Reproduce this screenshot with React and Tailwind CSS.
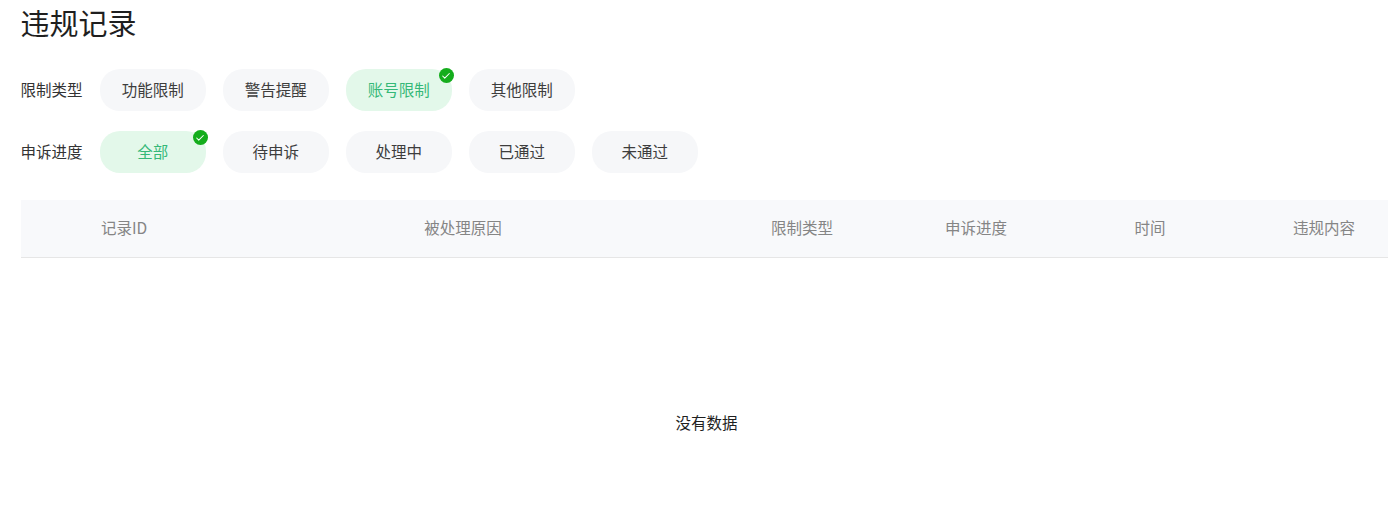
import { Check } from 'lucide-react';

const typeOptions = [
  { label: '功能限制' },
  { label: '警告提醒' },
  { label: '账号限制', active: true },
  { label: '其他限制' },
];

const progressOptions = [
  { label: '全部', active: true },
  { label: '待申诉' },
  { label: '处理中' },
  { label: '已通过' },
  { label: '未通过' },
];

const columns = ['限制类型', '申诉进度', '时间', '违规内容'];

function Pill({ label, active }) {
  return (
    <div
      className={`relative flex h-[42px] w-[105.5px] items-center justify-center rounded-[20px] ${
        active ? 'bg-[#e3f8ea] text-[#35b878]' : 'bg-[#f6f7f9] text-[#3d3d3d]'
      }`}
    >
      {label}
      {active && (
        <span className="absolute right-[-2px] top-[-1px] flex h-[15px] w-[15px] items-center justify-center rounded-full bg-[#14ad1c] text-white">
          <Check size={10} strokeWidth={2.5} />
        </span>
      )}
    </div>
  );
}

function FilterRow({ title, options }) {
  return (
    <div className="flex h-[42px] items-center">
      <div className="w-[79.5px] text-[#333333]">{title}</div>
      <div className="flex gap-[17.5px]">
        {options.map((o) => (
          <Pill key={o.label} label={o.label} active={o.active} />
        ))}
      </div>
    </div>
  );
}

export default function App() {
  return (
    <div
      className="h-[530px] overflow-hidden bg-white pl-[20.5px] text-[15.5px]"
      style={{ fontFamily: '"Noto Sans CJK SC", "Noto Sans", sans-serif' }}
    >
      <h1 className="h-[69px] pt-[2px] text-[29px] leading-[40px] font-normal text-[#1f1f1f]">违规记录</h1>
      <div className="flex flex-col gap-[20px]">
        <FilterRow title="限制类型" options={typeOptions} />
        <FilterRow title="申诉进度" options={progressOptions} />
      </div>
      <div className="mt-[27px] grid h-[58px] w-[1390px] grid-cols-[190.5px_504px_174px_174px_174px_174px] items-center border-b border-[#e6e6e6] bg-[#f8f9fb] pb-[1px] text-[#858585]">
        <div className="pl-[80.5px]">记录ID</div>
        <div className="text-center">被处理原因</div>
        {columns.map((c) => (
          <div key={c} className="text-center">{c}</div>
        ))}
      </div>
      <div className="w-[1372px] pt-[152px] text-center leading-[24px] text-[#1f1f1f]">没有数据</div>
    </div>
  );
}
